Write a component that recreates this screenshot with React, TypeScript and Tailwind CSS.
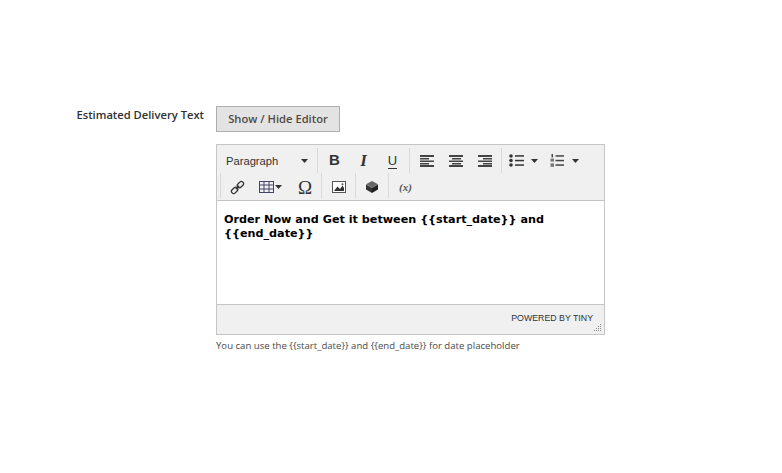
import type { ReactNode } from "react";

const iconColor = "#333333";

function Sep({ className = "" }: { className?: string }) {
  return <div className={`h-[25px] w-px shrink-0 bg-[#d9d9d9] ${className}`} />;
}

function Caret({ className = "" }: { className?: string }) {
  return (
    <svg width="7" height="4" viewBox="0 0 7 4" className={className}>
      <path d="M0 0h7L3.5 4z" fill={iconColor} />
    </svg>
  );
}

function Icon({ children, w = 16, h = 16 }: { children: ReactNode; w?: number; h?: number }) {
  return (
    <svg width={w} height={h} viewBox={`0 0 ${w} ${h}`} className="block shrink-0">
      {children}
    </svg>
  );
}

function AlignIcon({ mode }: { mode: "left" | "center" | "right" }) {
  const short = mode === "left" ? 1 : mode === "center" ? 4 : 6;
  return (
    <Icon w={15} h={13}>
      <g fill="#444444">
        <rect x="1" y="1" width="14" height="2" />
        <rect x={short} y="4" width="9" height="1.5" />
        <rect x="1" y="6.5" width="14" height="1.5" />
        <rect x={short} y="9" width="9" height="1.5" />
        <rect x="1" y="11" width="14" height="2" />
      </g>
    </Icon>
  );
}

function BulletIcon() {
  return (
    <Icon w={15} h={13}>
      <g fill="#333333">
        <circle cx="2" cy="2" r="1.8" />
        <circle cx="2" cy="6.5" r="1.8" />
        <circle cx="2" cy="11" r="1.8" />
        <rect x="6" y="1.2" width="9" height="1.5" />
        <rect x="6" y="5.8" width="9" height="1.5" />
        <rect x="6" y="10.3" width="9" height="1.5" />
      </g>
    </Icon>
  );
}

function NumberIcon() {
  return (
    <Icon w={14} h={13}>
      <g fill="#444444">
        <rect x="1.5" y="0" width="1.5" height="3.4" />
        <rect x="0.5" y="4.6" width="3.5" height="3" fill="#777777" />
        <rect x="0.5" y="9.4" width="3.5" height="3.4" fill="#777777" />
        <rect x="5.5" y="1.2" width="8.5" height="1.5" />
        <rect x="5.5" y="5.8" width="8.5" height="1.5" />
        <rect x="5.5" y="10.3" width="8.5" height="1.5" />
      </g>
    </Icon>
  );
}

function LinkIcon() {
  return (
    <Icon w={15} h={15}>
      <g fill="none" stroke="#333333" strokeWidth="1.3">
        <rect x="-3.5" y="-2.2" width="7" height="4.4" rx="2.2" transform="translate(4.6 10.4) rotate(-45)" />
        <rect x="-3.5" y="-2.2" width="7" height="4.4" rx="2.2" transform="translate(10.4 4.6) rotate(-45)" />
        <path d="M5.8 9.2 9.2 5.8" />
      </g>
    </Icon>
  );
}

function TableIcon() {
  return (
    <Icon w={15} h={12}>
      <g fill="none" stroke="#444466" strokeWidth="1">
        <rect x="0.5" y="0.5" width="14" height="11" />
        <path d="M5 1v10M10 1v10M1 4h13M1 8h13" />
      </g>
    </Icon>
  );
}

function ImageIcon() {
  return (
    <Icon w={14} h={12}>
      <rect x="0.5" y="0.5" width="13" height="11" fill="#fff" stroke="#555555" />
      <path d="M2 10 5.5 5.5 8 8l2.5-3.5L12 7v3z" fill="#333333" />
      <circle cx="10.5" cy="3.2" r="1" fill="#555555" />
    </Icon>
  );
}

function WidgetIcon() {
  return (
    <Icon w={14} h={14}>
      <path d="M7 1 13 4.2 7 7.4 1 4.2z" fill="#666666" />
      <path d="M1 4.6v4.8L7 13V7.8z" fill="#333333" />
      <path d="M13 4.6v4.8L7 13V7.8z" fill="#222222" />
    </Icon>
  );
}

function Grip() {
  return (
    <svg width="8" height="8" viewBox="0 0 8 8" className="absolute right-[2px] bottom-[2px]">
      <g fill="#8a8a8a">
        <rect x="6" y="0" width="1" height="1" />
        <rect x="4" y="2" width="1" height="1" />
        <rect x="6" y="2" width="1" height="1" />
        <rect x="2" y="4" width="1" height="1" />
        <rect x="4" y="4" width="1" height="1" />
        <rect x="6" y="4" width="1" height="1" />
        <rect x="0" y="6" width="1" height="1" />
        <rect x="2" y="6" width="1" height="1" />
        <rect x="4" y="6" width="1" height="1" />
        <rect x="6" y="6" width="1" height="1" />
      </g>
    </svg>
  );
}

function Toolbar() {
  return (
    <div className="h-[56px] border-b border-[#c5c5c5] bg-[#f0f0f0] px-[3px] pt-[3px]">
      <div className="flex h-[25px] items-center">
        <div className="flex w-[97px] items-center justify-between pl-[6px] pr-[9px] pt-[1px] font-['Liberation_Sans',sans-serif] text-[11.2px] text-[#333333]">
          <span>Paragraph</span>
          <Caret />
        </div>
        <Sep />
        <span className="w-[33px] text-center font-['Liberation_Sans',sans-serif] text-[15px] font-bold text-[#333333]">B</span>
        <span className="w-[25px] text-center font-['Liberation_Serif',serif] text-[17px] font-bold italic text-[#333333]">I</span>
        <span className="w-[33px] text-center font-['Liberation_Sans',sans-serif] text-[13px] leading-[15px] text-[#333333]">
          <span className="border-b border-[#333333]">U</span>
        </span>
        <Sep />
        <div className="ml-[9px] flex items-center gap-[14px]">
          <AlignIcon mode="left" />
          <AlignIcon mode="center" />
          <AlignIcon mode="right" />
        </div>
        <Sep className="ml-[9px]" />
        <div className="ml-[7px] flex items-center gap-[7px]">
          <BulletIcon />
          <Caret />
        </div>
        <div className="ml-[12px] flex items-center gap-[8px]">
          <NumberIcon />
          <Caret />
        </div>
      </div>
      <div className="flex h-[28px] items-center">
        <Sep className="self-start" />
        <div className="flex w-[33px] justify-center">
          <LinkIcon />
        </div>
        <div className="flex w-[30px] items-center gap-[1px] pl-[5px]">
          <TableIcon />
          <Caret />
        </div>
        <span className="w-[37px] pl-[5px] text-center font-['Liberation_Serif',serif] text-[19px] leading-none text-[#333333]">Ω</span>
        <Sep className="self-start" />
        <div className="flex w-[33px] justify-center">
          <ImageIcon />
        </div>
        <Sep className="self-start" />
        <div className="flex w-[32px] justify-center">
          <WidgetIcon />
        </div>
        <Sep className="self-start" />
        <span className="w-[33px] text-center font-['Liberation_Serif',serif] text-[11px] font-bold italic text-[#555555]">(x)</span>
      </div>
    </div>
  );
}

export default function App() {
  return (
    <div className="flex h-[473px] items-start gap-[12px] bg-white pt-[106px] font-['Open_Sans',sans-serif]">
      <label className="w-[204px] pt-[1px] text-right text-[11.2px] font-semibold leading-[16px] text-[#303030]">
        Estimated Delivery Text
      </label>
      <div className="w-[389px]">
        <button className="block h-[26px] w-[124px] border border-[#adadad] bg-[#e3e3e3] text-[11.2px] font-semibold text-[#514943]">
          Show / Hide Editor
        </button>
        <div className="mt-[12px] border border-[#c5c5c5]">
          <Toolbar />
          <div className="h-[103px] bg-white px-[7px] pt-[12px] font-['DejaVu_Sans',sans-serif] text-[11.2px] font-bold leading-[14px] text-black">
            Order Now and Get it between {"{{start_date}}"} and {"{{end_date}}"}
          </div>
          <div className="relative flex h-[30px] items-start justify-end border-t border-[#c5c5c5] bg-[#f0f0f0] pr-[11px] pt-[7px] font-['Liberation_Sans',sans-serif] text-[8.8px] leading-[13px] text-[#333333]">
            POWERED BY TINY
            <Grip />
          </div>
        </div>
        <p className="mt-[3px] text-[9.6px] leading-[15px] text-[#4a4a4a]">
          You can use the {"{{start_date}}"} and {"{{end_date}}"} for date placeholder
        </p>
      </div>
    </div>
  );
}
